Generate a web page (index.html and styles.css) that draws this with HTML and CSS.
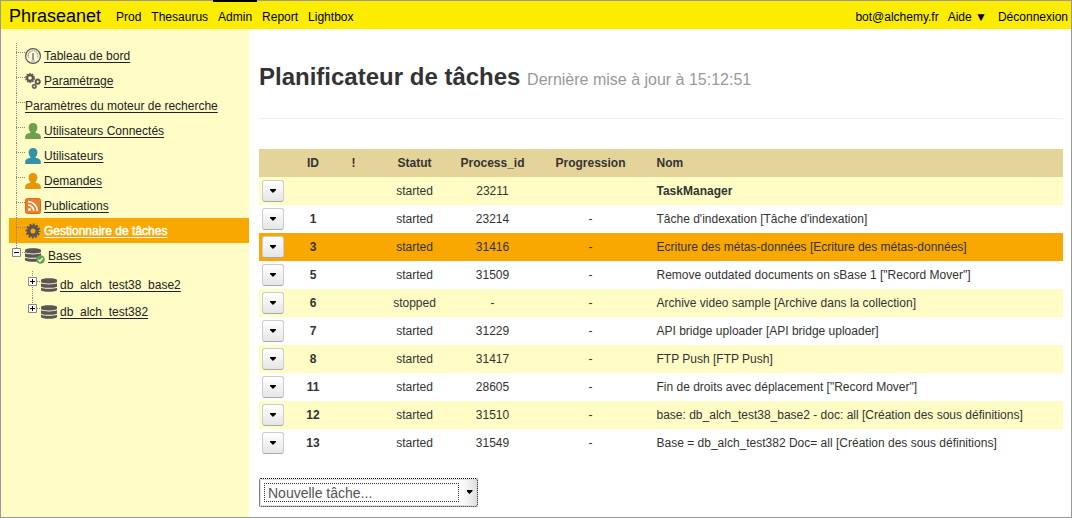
FILE: index.html
```html
<!DOCTYPE html>
<html lang="fr">
<head>
<meta charset="utf-8">
<title>Phraseanet - Admin</title>
<link rel="stylesheet" href="styles.css">
</head>
<body>
<svg class="defs" width="0" height="0">
  <symbol id="user" viewBox="0 0 16 16"><path d="M8 0C5.200 0 3.500 1.800 3.600 4.500c.1 2.100.9 3.700 1.900 4.500v.8C2.500 10.300.2 11.500.2 13.600V16h15.600v-2.400c0-2.100-2.300-3.300-5.300-3.800V9c1-.8 1.800-2.400 1.900-4.500C12.500 1.800 10.800 0 8 0z" fill="currentColor"/></symbol>
  <symbol id="db" viewBox="0 0 16 14"><g fill="#5b5555"><path d="M0 2.200C0-.4 16-.4 16 2.200v1.500c0 2.300-16 2.300-16 0z"/><path d="M0 5.300c3 1.500 13 1.500 16 0v2.900c0 2.200-16 2.200-16 0z"/><path d="M0 9.700c3 1.500 13 1.500 16 0v2.100c0 2.700-16 2.700-16 0z"/></g></symbol>
  <symbol id="gear" viewBox="0 0 16 16"><circle cx="8" cy="8" r="4.200" fill="none" stroke="#5b5555" stroke-width="3.400"/><circle cx="8" cy="8" r="6.300" fill="none" stroke="#5b5555" stroke-width="2.200" stroke-dasharray="1.900 1.399" stroke-dashoffset=".95"/></symbol>
</svg>
<div class="app">
  <header class="topbar">
    <span class="brand">Phraseanet</span>
    <nav class="nav"><a>Prod</a><a>Thesaurus</a><a class="current">Admin</a><a>Report</a><a>Lightbox</a></nav>
    <div class="account"><a>bot@alchemy.fr</a><a class="help">Aide ▼</a><a>Déconnexion</a></div>
  </header>
  <div class="body">
    <aside class="sidebar">
      <ul class="tree">
        <li><svg class="ico" viewBox="0 0 16 16"><circle cx="8" cy="8" r="7.400" fill="#fffcd8" stroke="#5b5555" stroke-width="1.200"/><path d="M3.600 9.800A4.900 4.900 0 1 1 12.400 9.800" fill="none" stroke="#8a8580" stroke-width="1.100" stroke-dasharray="1.200 .6"/><path d="M8 5v7" stroke="#555" stroke-width="1.200"/><path d="M6 13h4" stroke="#999"/></svg><a>Tableau de bord</a></li>
        <li><svg class="ico" viewBox="0 0 16 16"><g fill="none" stroke="#5b5555"><circle cx="5" cy="5" r="2.900" stroke-width="2.200"/><circle cx="5" cy="5" r="4.300" stroke-width="1.300" stroke-dasharray="1.700 1"/><circle cx="12.700" cy="8.700" r="2" stroke-width="1.700"/><circle cx="12.700" cy="8.700" r="2.900" stroke-width=".8" stroke-dasharray="1.200 1"/><circle cx="9.300" cy="13.400" r="1.600" stroke-width="1.500"/><circle cx="9.300" cy="13.400" r="2.300" stroke-width=".7" stroke-dasharray="1 .8"/></g></svg><a>Paramétrage</a></li>
        <li><a class="flush">Paramètres du moteur de recherche</a></li>
        <li><svg class="ico green"><use href="#user"/></svg><a>Utilisateurs Connectés</a></li>
        <li><svg class="ico teal"><use href="#user"/></svg><a>Utilisateurs</a></li>
        <li><svg class="ico amber"><use href="#user"/></svg><a>Demandes</a></li>
        <li><svg class="ico" viewBox="0 0 16 16"><rect x=".5" y=".5" width="15" height="15" rx="2" fill="#ef7f27" stroke="#d9691b"/><circle cx="4.500" cy="11.500" r="1.500" fill="#fff"/><path d="M3 7.200a5.800 5.800 0 0 1 5.800 5.800M3 3.700a9.300 9.300 0 0 1 9.300 9.300" fill="none" stroke="#fff" stroke-width="1.700"/></svg><a>Publications</a></li>
        <li class="selected"><svg class="ico"><use href="#gear"/></svg><a>Gestionnaire de tâches</a></li>
        <li class="last"><svg class="box" viewBox="0 0 9 9"><path d="M.5.5h8v8h-8z" fill="#fff" stroke="#888"/><path d="M2 4.500h5" stroke="#000"/></svg><svg class="bases" viewBox="0 0 20 16"><use href="#db" width="16" height="14"/><circle cx="15.500" cy="11.500" r="4.300" fill="#5fa04a"/><path d="M13.300 11.600l1.600 1.600 2.800-3.200" fill="none" stroke="#fff" stroke-width="1.300"/></svg><a>Bases</a></li>
      </ul>
      <ul class="subtree">
        <li><svg class="box" viewBox="0 0 9 9"><path d="M.5.5h8v8h-8z" fill="#fff" stroke="#888"/><path d="M2 4.500h5M4.500 2v5" stroke="#000"/></svg><svg class="db"><use href="#db"/></svg><a>db_alch_test38_base2</a></li>
        <li><svg class="box" viewBox="0 0 9 9"><path d="M.5.5h8v8h-8z" fill="#fff" stroke="#888"/><path d="M2 4.500h5M4.500 2v5" stroke="#000"/></svg><svg class="db"><use href="#db"/></svg><a>db_alch_test382</a></li>
      </ul>
    </aside>
    <main class="content">
      <h1>Planificateur de tâches <small>Dernière mise à jour à 15:12:51</small></h1>
      <table class="tasks">
        <colgroup><col class="c-menu"><col class="c-id"><col class="c-flag"><col class="c-status"><col class="c-pid"><col class="c-prog"><col></colgroup>
        <thead><tr><th></th><th>ID</th><th>!</th><th>Statut</th><th>Process_id</th><th>Progression</th><th>Nom</th></tr></thead>
        <tbody>
          <tr><td><button class="menu"></button></td><td></td><td></td><td>started</td><td>23211</td><td></td><td><b>TaskManager</b></td></tr>
          <tr><td><button class="menu"></button></td><td>1</td><td></td><td>started</td><td>23214</td><td>-</td><td>Tâche d'indexation [Tâche d'indexation]</td></tr>
          <tr class="active"><td><button class="menu"></button></td><td>3</td><td></td><td>started</td><td>31416</td><td>-</td><td>Ecriture des métas-données [Ecriture des métas-données]</td></tr>
          <tr><td><button class="menu"></button></td><td>5</td><td></td><td>started</td><td>31509</td><td>-</td><td>Remove outdated documents on sBase 1 ["Record Mover"]</td></tr>
          <tr><td><button class="menu"></button></td><td>6</td><td></td><td>stopped</td><td>-</td><td>-</td><td>Archive video sample [Archive dans la collection]</td></tr>
          <tr><td><button class="menu"></button></td><td>7</td><td></td><td>started</td><td>31229</td><td>-</td><td>API bridge uploader [API bridge uploader]</td></tr>
          <tr><td><button class="menu"></button></td><td>8</td><td></td><td>started</td><td>31417</td><td>-</td><td>FTP Push [FTP Push]</td></tr>
          <tr><td><button class="menu"></button></td><td>11</td><td></td><td>started</td><td>28605</td><td>-</td><td>Fin de droits avec déplacement ["Record Mover"]</td></tr>
          <tr><td><button class="menu"></button></td><td>12</td><td></td><td>started</td><td>31510</td><td>-</td><td>base: db_alch_test38_base2 - doc: all [Création des sous définitions]</td></tr>
          <tr><td><button class="menu"></button></td><td>13</td><td></td><td>started</td><td>31549</td><td>-</td><td>Base = db_alch_test382 Doc= all [Création des sous définitions]</td></tr>
        </tbody>
      </table>
      <div class="newtask"><span class="value">Nouvelle tâche...</span><span class="drop"></span></div>
    </main>
  </div>
</div>
</body>
</html>
```
FILE: styles.css
```css
* { box-sizing: border-box; }
body { margin: 0; font: 12px/20px "Liberation Sans", Arial, sans-serif; color: #333; background: #fff; }
ul { list-style: none; margin: 0; padding: 0; }
.defs { position: absolute; }
.app { height: 518px; border: 1px solid #999; display: flex; flex-direction: column; }

.topbar { height: 28px; flex: none; background: #fcec00; color: #000; display: flex; padding: 0 3px 0 8px; line-height: 32px; }
.brand { font-size: 18px; width: 102px; line-height: 30px; }
.nav { display: flex; }
.nav a { padding: 0 5px; margin-top: -1px; height: 28px; border-top: 2px solid transparent; line-height: 30px; }
.nav .current { border-top-color: #000; }
.account { margin-left: auto; display: flex; gap: 9px; }
.help { padding-right: 2px; }

.body { flex: 1; display: flex; min-height: 0; }
.sidebar { width: 248px; flex: none; background: #fffcc6; padding: 14px 0 0 8px; }
.sidebar a { text-decoration: underline; text-underline-offset: 2px; color: #222; white-space: nowrap; }
.tree li { height: 25px; display: flex; align-items: center; padding-left: 16px; gap: 3px;
  background: repeating-linear-gradient(90deg, #888 0 1px, transparent 1px 2px) 7px 9px / 9px 1px no-repeat,
    repeating-linear-gradient(180deg, #888 0 1px, transparent 1px 2px) 7px 0 / 1px 26px no-repeat; }
.tree li.selected { background-color: #f8a800; }
.tree .selected a { color: #fff; -webkit-text-stroke: .5px #fff; }
.tree li.last { padding-left: 3px; gap: 3px; background-size: 9px 1px, 1px 9px; }
.last .bases { margin-left: 1px; }
.ico { width: 16px; height: 16px; flex: none; }
.green { color: #70a04d; }
.teal { color: #3293a8; }
.amber { color: #e49605; }
.box { width: 9px; height: 9px; flex: none; margin-bottom: 7px; }
.bases { width: 20px; height: 16px; }
.db { width: 16px; height: 14px; margin-left: 1px; }
.subtree { padding: 3px 0 0 19px; }
.subtree li { height: 27px; display: flex; align-items: center; gap: 3px;
  background: repeating-linear-gradient(90deg, #888 0 1px, transparent 1px 2px) 9px 10px / 5px 1px no-repeat,
    repeating-linear-gradient(180deg, #888 0 1px, transparent 1px 2px) 4px 0 / 1px 27px no-repeat; }
.subtree li:last-child { background-size: 5px 1px, 1px 10px; }

.content { flex: 1; padding: 28px 8px 0 10px; min-width: 0; }
h1 { margin: 0 0 30px; padding-bottom: 21px; border-bottom: 1px solid #eee; font-size: 24px; line-height: 40px; height: 62px; white-space: nowrap; }
h1 small { font-size: 16px; line-height: 20px; font-weight: normal; color: #999; }
.tasks { width: 804px; table-layout: fixed; border-collapse: collapse; text-align: center; }
.c-menu { width: 29px; }
.c-id { width: 50px; }
.c-flag { width: 31px; }
.c-status { width: 91px; }
.c-pid { width: 65px; }
.c-prog { width: 131px; }
.tasks tr { height: 28px; }
.tasks th, .tasks td { padding: 0; white-space: nowrap; }
.tasks thead { background: #e4d49a; }
.tasks tbody tr:nth-child(odd) { background: #fffcc6; }
.tasks tbody tr.active { background: #f8a800; }
.tasks th:last-child, .tasks td:last-child { text-align: left; padding-left: .5px; }
.tasks td:nth-child(2) { font-weight: bold; }
.menu { display: flex; align-items: center; justify-content: center; width: 22px; height: 22px; margin-left: 3px; padding: 0;
  border: 1px solid #ccc; border-bottom-color: #aaa; border-radius: 3px; background: linear-gradient(#fff, #e6e6e6); }
.menu::before, .drop::before { content: ""; width: 6px; height: 4px; background: #000; clip-path: polygon(0 0, 100% 0, 100% 25%, 50% 100%, 0 25%); }
.newtask { display: flex; width: 219px; height: 29px; margin: 21px 0 0; border: 1px dotted #000; border-radius: 2px; outline: 1px solid #ddd; outline-offset: -2px; padding-left: 4px; }
.value { width: 195px; height: 19px; margin: 4px 0; border: 1px dotted #333; font-size: 14px; line-height: 19px; padding-left: 3px; color: #555; }
.drop { margin-left: auto; width: 14px; background: linear-gradient(90deg, #fafafa, #e2e2e2); border-right: 1px solid #444; border-bottom: 1px solid #555; display: flex; align-items: center; justify-content: center; }
```
